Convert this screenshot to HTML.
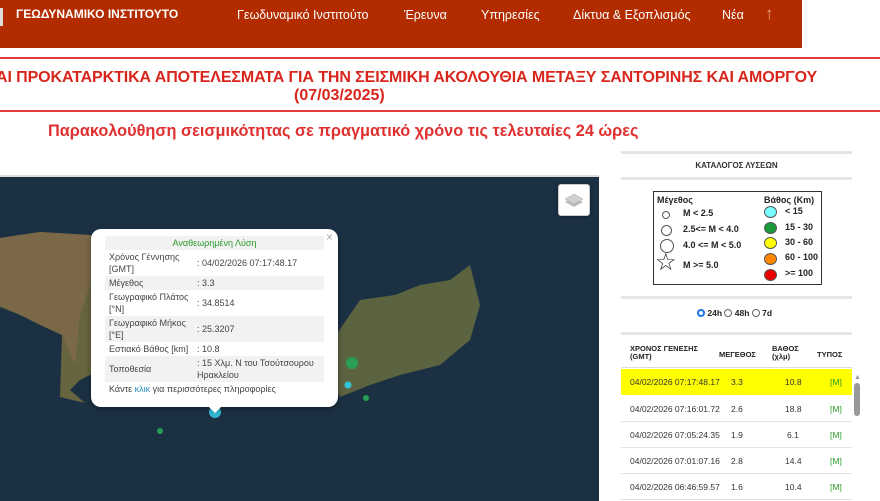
<!DOCTYPE html>
<html><head><meta charset="utf-8"><style>
*{margin:0;padding:0;box-sizing:border-box}
body{width:880px;height:501px;overflow:hidden;background:#fff;font-family:"Liberation Sans",sans-serif;position:relative}
.a{position:absolute}
.hdr{left:0;top:0;width:802px;height:48px;background:#b32c00}
.nav{color:#fff;font-size:12.5px;top:8px}
.t{color:#d9261c;font-weight:bold;font-size:16px;white-space:nowrap}
.hl{height:2px;background:#e03a3a;left:0;width:880px}
.gl{left:621px;width:231px;height:3px;background:#e5e5e5}
.pop td{font-size:9px;color:#444;padding:0 4px;vertical-align:middle}
.row{left:621px;width:231px;height:26px;border-bottom:1px solid #e3e3e3;font-size:8.5px;color:#333}
.row span{position:absolute;top:8px}
.dot{position:absolute;border-radius:50%;border:1px solid #555}
</style></head><body>
<div class="a hdr"></div>
<div class="a" style="left:0;top:8px;width:3px;height:18px;background:#ddd"></div>
<div class="a" style="left:16px;top:7px;color:#fff;font-weight:bold;font-size:12px">ΓΕΩΔΥΝΑΜΙΚΟ ΙΝΣΤΙΤΟΥΤΟ</div>
<div class="a nav" style="left:237px">Γεωδυναμικό Ινστιτούτο</div>
<div class="a nav" style="left:404px">Έρευνα</div>
<div class="a nav" style="left:481px">Υπηρεσίες</div>
<div class="a nav" style="left:573px">Δίκτυα &amp; Εξοπλισμός</div>
<div class="a nav" style="left:722px">Νέα</div>
<div class="a" style="left:765px;top:4px;color:#f0a080;font-size:17px">↑</div>
<div class="a hl" style="top:57px"></div>
<div class="a t" style="left:-4px;top:69px;letter-spacing:-0.1px">ΑΙ ΠΡΟΚΑΤΑΡΚΤΙΚΑ ΑΠΟΤΕΛΕΣΜΑΤΑ ΓΙΑ ΤΗΝ ΣΕΙΣΜΙΚΗ ΑΚΟΛΟΥΘΙΑ ΜΕΤΑΞΥ ΣΑΝΤΟΡΙΝΗΣ ΚΑΙ ΑΜΟΡΓΟΥ</div>
<div class="a t" style="left:294px;top:87px">(07/03/2025)</div>
<div class="a hl" style="top:110px"></div>
<div class="a" style="left:48px;top:122px;color:#e03030;font-size:16.3px;font-weight:bold">Παρακολούθηση σεισμικότητας σε πραγματικό χρόνο τις τελευταίες 24 ώρες</div>

<svg class="a" style="left:0;top:175px" width="599" height="326">
<rect width="599" height="326" fill="#1b3143"/>
<rect x="0" y="0" width="599" height="2" fill="#ddd"/>
<path d="M0 63 L40 57 L90 60 L150 72 L190 62 L200 70 L210 120 L160 160 L110 190 L80 205 L70 215 L85 228 L60 222 L62 160 L40 150 L20 140 L0 132Z" fill="#66653f"/>
<path d="M0 63 L40 57 L90 60 L100 80 L80 140 L75 190 L62 160 L0 130Z" fill="#7a6848"/>
<path d="M336 160 L360 125 L395 120 L420 110 L450 105 L470 90 L480 130 L470 165 L440 190 L400 200 L370 210 L340 222 L330 200Z" fill="#5c6340"/>
<circle cx="352" cy="188" r="6" fill="#2a9e55"/>
<circle cx="348" cy="210" r="3.5" fill="#33c3d8"/>
<circle cx="366" cy="223" r="3" fill="#2a9e55"/>
<circle cx="160" cy="256" r="3" fill="#2a9e55"/>
<circle cx="215" cy="237" r="6" fill="#33b7d0"/>
</svg>
<div class="a" style="left:558px;top:184px;width:32px;height:32px;background:#fff;border-radius:3px;border:1px solid #ccc;box-shadow:0 1px 3px rgba(0,0,0,.4)">
<svg width="30" height="30"><path d="M6 17 L15 12 L24 17 L15 22Z" fill="#bbb"/><path d="M6 14 L15 9 L24 14 L15 19Z" fill="#d0d0d0" stroke="#aaa" stroke-width=".5"/></svg></div>

<div class="a" style="left:91px;top:229px;width:247px;height:178px;background:#fff;border-radius:10px;box-shadow:0 2px 6px rgba(0,0,0,.4)"></div>
<div class="a" style="left:206px;top:404px;width:0;height:0;border-left:9px solid transparent;border-right:9px solid transparent;border-top:9px solid #fff"></div>
<div class="a" style="left:326px;top:230px;color:#aaa;font-size:12px">×</div>
<table class="a pop" style="left:105px;top:236px;width:219px;border-collapse:collapse">
<tr style="background:#f2f2f2;height:14px"><td colspan="2" style="text-align:center;color:#2a9a2a">Αναθεωρημένη Λύση</td></tr>
<tr style="height:26px"><td style="width:88px;line-height:12px">Χρόνος Γέννησης [GMT]</td><td>: 04/02/2026 07:17:48.17</td></tr>
<tr style="background:#f2f2f2;height:14px"><td>Μέγεθος</td><td>: 3.3</td></tr>
<tr style="height:26px"><td style="line-height:12px">Γεωγραφικό Πλάτος [°N]</td><td>: 34.8514</td></tr>
<tr style="background:#f2f2f2;height:26px"><td style="line-height:12px">Γεωγραφικό Μήκος [°E]</td><td>: 25.3207</td></tr>
<tr style="height:14px"><td>Εστιακό Βάθος [km]</td><td>: 10.8</td></tr>
<tr style="background:#f2f2f2;height:26px"><td>Τοποθεσία</td><td style="line-height:12px">: 15 Χλμ. Ν του Τσούτσουρου Ηρακλείου</td></tr>
<tr style="height:14px"><td colspan="2">Κάντε <span style="color:#2a8fc0">κλικ</span> για περισσότερες πληροφορίες</td></tr>
</table>

<div class="a gl" style="top:151px"></div>
<div class="a" style="left:621px;top:161px;width:231px;text-align:center;font-size:8px;font-weight:bold;color:#333">ΚΑΤΑΛΟΓΟΣ ΛΥΣΕΩΝ</div>
<div class="a gl" style="top:177px"></div>
<div class="a" style="left:653px;top:191px;width:169px;height:94px;border:1px solid #333;font-size:9px;font-weight:bold;color:#222">
<div class="a" style="left:3px;top:3px">Μέγεθος</div>
<div class="a" style="left:110px;top:3px">Βάθος (Km)</div>
<div class="dot" style="left:8px;top:19px;width:8px;height:8px"></div><div class="a" style="left:29px;top:16px">M &lt; 2.5</div>
<div class="dot" style="left:7px;top:33px;width:11px;height:11px"></div><div class="a" style="left:29px;top:32px">2.5&lt;= M &lt; 4.0</div>
<div class="dot" style="left:6px;top:47px;width:14px;height:14px"></div><div class="a" style="left:29px;top:48px">4.0 &lt;= M &lt; 5.0</div>
<div class="a" style="left:1px;top:59px;font-size:24px;font-weight:normal;line-height:24px">☆</div><div class="a" style="left:29px;top:68px">M &gt;= 5.0</div>
<div class="dot" style="left:110px;top:14px;width:13px;height:12px;background:#7ff"></div><div class="a" style="left:131px;top:14px">&lt; 15</div>
<div class="dot" style="left:110px;top:30px;width:13px;height:12px;background:#1a9a3a"></div><div class="a" style="left:131px;top:30px">15 - 30</div>
<div class="dot" style="left:110px;top:45px;width:13px;height:12px;background:#ff0"></div><div class="a" style="left:131px;top:45px">30 - 60</div>
<div class="dot" style="left:110px;top:61px;width:13px;height:12px;background:#f80"></div><div class="a" style="left:131px;top:60px">60 - 100</div>
<div class="dot" style="left:110px;top:77px;width:13px;height:12px;background:#e00"></div><div class="a" style="left:131px;top:76px">&gt;= 100</div>
</div>
<div class="a gl" style="top:296px"></div>
<div class="a" style="left:697px;top:308px;font-size:8.5px;font-weight:bold;color:#222">
<span style="display:inline-block;width:8px;height:8px;border-radius:50%;border:2px solid #1a73e8;vertical-align:-1px"></span> 24h <span style="display:inline-block;width:8px;height:8px;border-radius:50%;border:1px solid #666;vertical-align:-1px"></span> 48h <span style="display:inline-block;width:8px;height:8px;border-radius:50%;border:1px solid #666;vertical-align:-1px"></span> 7d</div>
<div class="a gl" style="top:332px"></div>
<div class="a" style="left:630px;top:345px;font-size:7.5px;font-weight:bold;color:#222;line-height:8px">ΧΡΟΝΟΣ ΓΕΝΕΣΗΣ<br>(GMT)</div>
<div class="a" style="left:719px;top:350px;font-size:7.5px;font-weight:bold;color:#222">ΜΕΓΕΘΟΣ</div>
<div class="a" style="left:772px;top:345px;font-size:7.5px;font-weight:bold;color:#222;line-height:8px">ΒΑΘΟΣ<br>(χλμ)</div>
<div class="a" style="left:817px;top:350px;font-size:7.5px;font-weight:bold;color:#222">ΤΥΠΟΣ</div>
<div class="a" style="left:621px;top:367px;width:231px;height:1px;background:#ddd"></div>
<div class="a row" style="top:369px;background:#ffff00;border:none"><span style="left:9px">04/02/2026 07:17:48.17</span><span style="left:110px">3.3</span><span style="left:164px">10.8</span><span style="left:209px;color:#2a9a2a">[M]</span></div>
<div class="a row" style="top:396px"><span style="left:9px">04/02/2026 07:16:01.72</span><span style="left:110px">2.6</span><span style="left:164px">18.8</span><span style="left:209px;color:#2a9a2a">[M]</span></div>
<div class="a row" style="top:422px"><span style="left:9px">04/02/2026 07:05:24.35</span><span style="left:110px">1.9</span><span style="left:166px">6.1</span><span style="left:209px;color:#2a9a2a">[M]</span></div>
<div class="a row" style="top:448px"><span style="left:9px">04/02/2026 07:01:07.16</span><span style="left:110px">2.8</span><span style="left:164px">14.4</span><span style="left:209px;color:#2a9a2a">[M]</span></div>
<div class="a row" style="top:474px"><span style="left:9px">04/02/2026 06:46:59.57</span><span style="left:110px">1.6</span><span style="left:164px">10.4</span><span style="left:209px;color:#2a9a2a">[M]</span></div>
<div class="a" style="left:854px;top:374px;color:#999;font-size:7px">▲</div>
<div class="a" style="left:854px;top:383px;width:6px;height:33px;border-radius:3px;background:#999"></div>
</body></html>
